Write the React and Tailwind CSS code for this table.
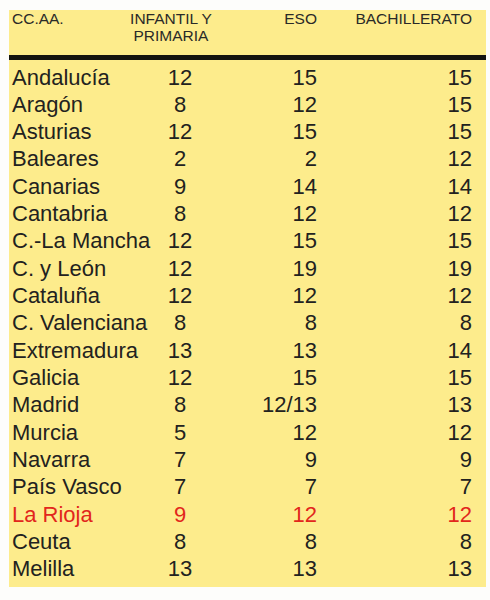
const rows = [
  ['Andalucía', '12', '15', '15'],
  ['Aragón', '8', '12', '15'],
  ['Asturias', '12', '15', '15'],
  ['Baleares', '2', '2', '12'],
  ['Canarias', '9', '14', '14'],
  ['Cantabria', '8', '12', '12'],
  ['C.-La Mancha', '12', '15', '15'],
  ['C. y León', '12', '19', '19'],
  ['Cataluña', '12', '12', '12'],
  ['C. Valenciana', '8', '8', '8'],
  ['Extremadura', '13', '13', '14'],
  ['Galicia', '12', '15', '15'],
  ['Madrid', '8', '12/13', '13'],
  ['Murcia', '5', '12', '12'],
  ['Navarra', '7', '9', '9'],
  ['País Vasco', '7', '7', '7'],
  ['La Rioja', '9', '12', '12', true],
  ['Ceuta', '8', '8', '8'],
  ['Melilla', '13', '13', '13'],
]

export default function App() {
  return (
    <div
      className="w-[490px] h-[600px] bg-[#fdfdfb] pt-[10px] pl-[9px]"
      style={{ fontFamily: '"Liberation Sans", Arial, sans-serif' }}
    >
      <div className="w-[477px] h-[577px] bg-[#fdec8c]">
        {/* Header */}
        <div className="grid grid-cols-[104px_110px_91px_155px] pl-[3px] pb-[11px] text-[15.5px] leading-[17px] text-[#2a2a28] whitespace-nowrap">
          <div>CC.AA.</div>
          <div className="text-center">
            INFANTIL Y
            <br />
            PRIMARIA
          </div>
          <div className="text-right">ESO</div>
          <div className="text-right">BACHILLERATO</div>
        </div>

        <div className="h-[5px] bg-[#141410] mb-[3.5px]" />

        {/* Rows */}
        <div className="pl-[3px]">
          {rows.map(([name, inf, eso, bach, red]) => (
            <div
              key={name}
              className={
                'grid grid-cols-[128px_80px_97px_155px] text-[22px] leading-[27.33px] whitespace-nowrap ' +
                (red ? 'text-[#e2261c]' : 'text-[#222220]')
              }
            >
              <div>{name}</div>
              <div className="text-center">{inf}</div>
              <div className="text-right">{eso}</div>
              <div className="text-right">{bach}</div>
            </div>
          ))}
        </div>
      </div>
    </div>
  )
}
